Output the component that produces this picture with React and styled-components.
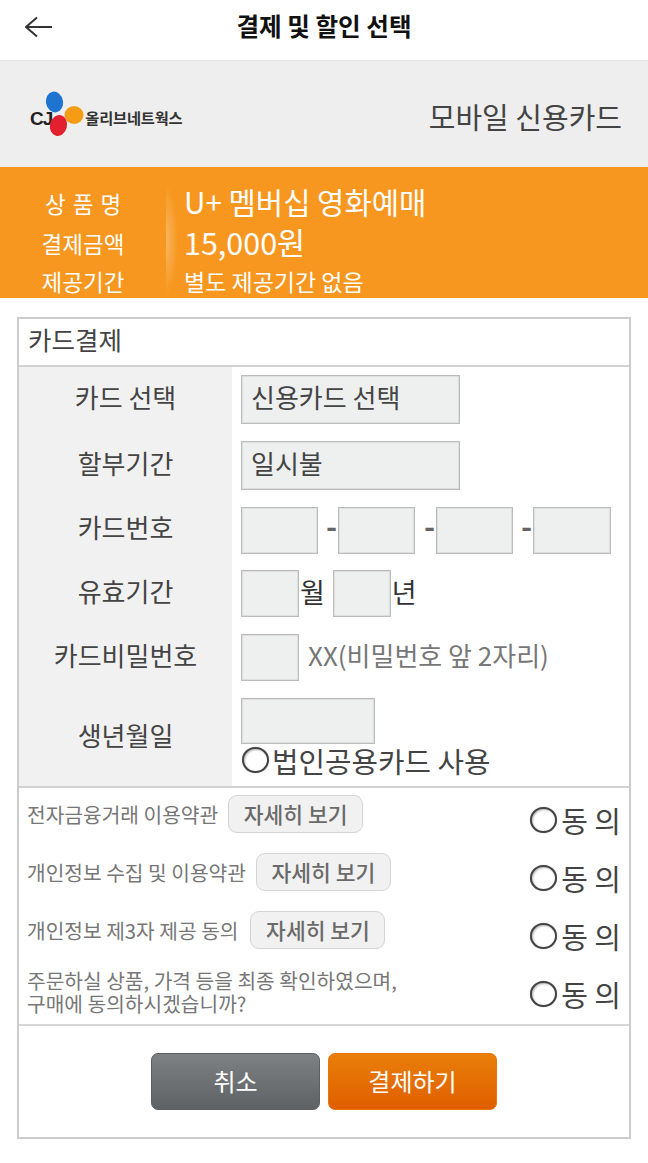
import React from 'react'
import styled, { createGlobalStyle } from 'styled-components'

const GlobalStyle = createGlobalStyle`
  * { box-sizing: border-box; }
  html, body { margin: 0; padding: 0; background: #fff; }
  body { font-family: "Noto Sans CJK KR", "Noto Sans", sans-serif; color: #444; }
`

const terms = [
  { text: '전자금융거래 이용약관', link: true, gap: 10 },
  { text: '개인정보 수집 및 이용약관', link: true, gap: 10 },
  { text: '개인정보 제3자 제공 동의', link: true, gap: 12 },
  { text: '주문하실 상품, 가격 등을 최종 확인하였으며,\n구매에 동의하시겠습니까?', link: false, gap: 0 },
]

export default function App() {
  return (
    <Page>
      <GlobalStyle />
      <Header>
        <BackButton aria-label="뒤로">
          <svg width="28" height="22" viewBox="0 0 28 22" fill="none" stroke="#333" strokeWidth="2">
            <path d="M1 11H27M12 1.500L1 11L12 20.500" />
          </svg>
        </BackButton>
        <HeaderTitle>결제 및 할인 선택</HeaderTitle>
      </Header>

      <BrandBar>
        <Logo>
          <LogoCj>CJ</LogoCj>
          <svg width="40" height="48" viewBox="45 90 40 48" style={{ marginLeft: -7 }}>
            <ellipse cx="54.500" cy="102" rx="8.500" ry="10.500" fill="#1f74cf" transform="rotate(-10 54.500 102)" />
            <ellipse cx="74" cy="115" rx="9.500" ry="9" fill="#f59c14" />
            <ellipse cx="58.500" cy="125.500" rx="8.500" ry="10.500" fill="#e3202e" transform="rotate(14 58.500 125.500)" />
          </svg>
          <LogoName>올리브네트웍스</LogoName>
        </Logo>
        <BrandTitle>모바일 신용카드</BrandTitle>
      </BrandBar>

      <OrderBand>
        <OrderLabels>
          <OrderLabel $h={40}>상 품 명</OrderLabel>
          <OrderLabel $h={41}>결제금액</OrderLabel>
          <OrderLabel $h={35}>제공기간</OrderLabel>
        </OrderLabels>
        <OrderDivider />
        <OrderValues>
          <OrderValue $h={38} $size={29.700}>U+ 멤버십 영화예매</OrderValue>
          <OrderValue $h={43} $size={30.500}>15,000원</OrderValue>
          <OrderValue $h={35} $size={23}>별도 제공기간 없음</OrderValue>
        </OrderValues>
      </OrderBand>

      <Card>
        <CardTitle>카드결제</CardTitle>

        <FormRow>
          <FormLabel>카드 선택</FormLabel>
          <FormField><SelectBox>신용카드 선택</SelectBox></FormField>
        </FormRow>
        <FormRow>
          <FormLabel>할부기간</FormLabel>
          <FormField><SelectBox>일시불</SelectBox></FormField>
        </FormRow>
        <FormRow>
          <FormLabel>카드번호</FormLabel>
          <FormField $short>
            <TextBox $w={77} />
            <Dash $w={20}>-</Dash>
            <TextBox $w={77} />
            <Dash $w={21}>-</Dash>
            <TextBox $w={77} />
            <Dash $w={20}>-</Dash>
            <TextBox $w={78} />
          </FormField>
        </FormRow>
        <FormRow>
          <FormLabel>유효기간</FormLabel>
          <FormField>
            <TextBox $w={58} />
            <Unit>월</Unit>
            <TextBox $w={58} $gap={8} />
            <Unit>년</Unit>
          </FormField>
        </FormRow>
        <FormRow>
          <FormLabel>카드비밀번호</FormLabel>
          <FormField>
            <TextBox $w={58} />
            <Hint>XX(비밀번호 앞 2자리)</Hint>
          </FormField>
        </FormRow>
        <FormRow>
          <FormLabel>생년월일</FormLabel>
          <BirthField>
            <TextBox $w={134} $h={46} />
            <CorpOption><Radio />법인공용카드 사용</CorpOption>
          </BirthField>
        </FormRow>

        <Terms>
          {terms.map((term) => (
            <TermRow key={term.text}>
              <TermLeft $link={term.link} $gap={term.gap}>
                <TermText>{term.text}</TermText>
                {term.link && <DetailButton>자세히 보기</DetailButton>}
              </TermLeft>
              <AgreeOption><Radio />동 의</AgreeOption>
            </TermRow>
          ))}
        </Terms>

        <Actions>
          <ActionButton $tone="gray">취소</ActionButton>
          <ActionButton $tone="orange">결제하기</ActionButton>
        </Actions>
      </Card>
    </Page>
  )
}

const Page = styled.div`
  width: 648px;
  min-height: 1163px;
  background: #fff;
`
const Header = styled.header`
  height: 61px;
  display: flex;
  align-items: center;
  justify-content: center;
  position: relative;
  border-bottom: 1px solid #e6e6e6;
`
const BackButton = styled.div`
  position: absolute;
  left: 25px;
  top: 16px;
  line-height: 0;
`
const HeaderTitle = styled.h1`
  margin: 0 0 10px;
  font-size: 24.600px;
  font-weight: 700;
  color: #111;
`
const BrandBar = styled.div`
  height: 106px;
  background: #eeeeee;
  display: flex;
  align-items: center;
  justify-content: space-between;
  padding: 0 26px 0 30px;
`
const Logo = styled.div`
  display: flex;
  align-items: center;
`
const LogoCj = styled.span`
  font-family: "Liberation Sans", sans-serif;
  font-size: 19px;
  font-weight: 700;
  color: #222;
  letter-spacing: -1px;
  padding-top: 9px;
`
const LogoName = styled.span`
  font-size: 15.300px;
  font-weight: 700;
  color: #333;
  letter-spacing: -0.200px;
  padding-top: 6px;
`
const BrandTitle = styled.div`
  font-size: 29px;
  color: #444;
  margin-top: 4px;
`
const OrderBand = styled.div`
  height: 131px;
  background: #f7971f;
  display: flex;
  padding-top: 16px;
  overflow: hidden;
  color: #fff;
`
const OrderLabels = styled.div`
  width: 166px;
  text-align: center;
`
const OrderLabel = styled.div`
  height: ${(p) => p.$h}px;
  line-height: ${(p) => p.$h}px;
  font-size: 22.500px;
  word-spacing: 2px;
`
const OrderDivider = styled.div`
  width: 18px;
  height: 112px;
  margin-top: 1px;
  background: radial-gradient(ellipse 12px 56px at left center, rgba(255, 255, 255, 0.3), rgba(255, 255, 255, 0));
`
const OrderValues = styled.div`
  flex: 1;
`
const OrderValue = styled.div`
  height: ${(p) => p.$h}px;
  line-height: ${(p) => p.$h}px;
  font-size: ${(p) => p.$size}px;
  white-space: nowrap;
`
const Card = styled.section`
  width: 614px;
  height: 822px;
  margin: 19px 0 0 17px;
  border: 2px solid #cccccc;
`
const CardTitle = styled.div`
  height: 48px;
  line-height: 40px;
  padding-left: 9px;
  font-size: 25.500px;
  color: #444;
  border-bottom: 2px solid #d2d2d2;
`
const FormRow = styled.div`
  display: grid;
  grid-template-columns: 213px 1fr;
`
const FormLabel = styled.div`
  background: #f1f1f1;
  display: flex;
  align-items: center;
  justify-content: center;
  padding-bottom: 8px;
  font-size: 26px;
  color: #444;
`
const FormField = styled.div`
  display: flex;
  align-items: flex-start;
  padding: 8px 0 ${(p) => (p.$short ? 8 : 9)}px 9px;
`
const BirthField = styled.div`
  padding: 8px 0 0 9px;
  height: 96px;
`
const SelectBox = styled.div`
  width: 219px;
  height: 49px;
  line-height: 41px;
  padding-left: 9px;
  font-size: 26px;
  color: #444;
  background: #eef0f0;
  border: 1px solid #bcbcbc;
  box-shadow: inset 0 0 0 1px #dedede;
`
const TextBox = styled.input`
  display: block;
  width: ${(p) => p.$w}px;
  height: ${(p) => p.$h || 47}px;
  margin: 0 0 0 ${(p) => p.$gap || 0}px;
  padding: 0;
  background: #eef0f0;
  border: 1px solid #bcbcbc;
  border-radius: 0;
  box-shadow: inset 0 0 0 1px #dedede;
`
const Dash = styled.span`
  width: ${(p) => p.$w}px;
  padding-right: 1px;
  text-align: right;
  font-size: 30px;
  line-height: 36px;
  font-weight: 700;
  color: #666;
`
const Unit = styled.span`
  font-size: 27px;
  line-height: 44px;
  color: #333;
  margin-left: 1px;
`
const Hint = styled.span`
  font-size: 26px;
  line-height: 42px;
  color: #777;
  margin-left: 9px;
`
const Radio = styled.span`
  display: inline-block;
  flex: none;
  width: 27px;
  height: 26px;
  border-radius: 50%;
  background: #fff;
  border: 2px solid #444;
  box-shadow: inset 1px 1px 2px #bbb, 0 0 1px #999;
`
const CorpOption = styled.div`
  display: flex;
  align-items: center;
  gap: 3px;
  height: 32px;
  margin-left: 1px;
  font-size: 28.800px;
  color: #444;
`
const Terms = styled.div`
  border-top: 2px solid #d2d2d2;
  border-bottom: 2px solid #d8d8d8;
  padding: 0 8px 6px 8px;
  height: 240px;
`
const TermRow = styled.div`
  height: 58px;
  display: flex;
  align-items: center;
  justify-content: space-between;
`
const TermLeft = styled.div`
  display: flex;
  align-items: center;
  gap: ${(p) => p.$gap}px;
  margin-bottom: ${(p) => (p.$link ? 6 : 0)}px;
  margin-top: ${(p) => (p.$link ? 0 : 2)}px;
`
const TermText = styled.span`
  font-size: 20.300px;
  line-height: 23px;
  color: #777;
  white-space: pre-line;
`
const DetailButton = styled.button`
  width: 135px;
  height: 38px;
  padding: 0;
  border: 1px solid #d4d4d4;
  border-radius: 9px;
  background: #f1f1f1;
  font-family: inherit;
  font-size: 21.500px;
  font-weight: 500;
  line-height: 30px;
  color: #6a6a6a;
`
const AgreeOption = styled.div`
  display: flex;
  align-items: center;
  gap: 4px;
  margin-top: 6px;
  font-size: 29px;
  line-height: 34px;
  color: #444;
`
const Actions = styled.div`
  display: flex;
  justify-content: center;
  gap: 8px;
  padding-top: 27px;
`
const ActionButton = styled.button`
  width: 169px;
  height: 57px;
  padding: 0 0 2px;
  border-radius: 7px;
  border: 1px solid ${(p) => (p.$tone === 'orange' ? '#e8760a' : '#5c5f61')};
  background: ${(p) =>
    p.$tone === 'orange'
      ? 'linear-gradient(to bottom, #e97f08, #e05e00)'
      : 'linear-gradient(to bottom, #7d8184, #5f6264)'};
  font-family: inherit;
  font-size: 24px;
  color: #fff;
`
